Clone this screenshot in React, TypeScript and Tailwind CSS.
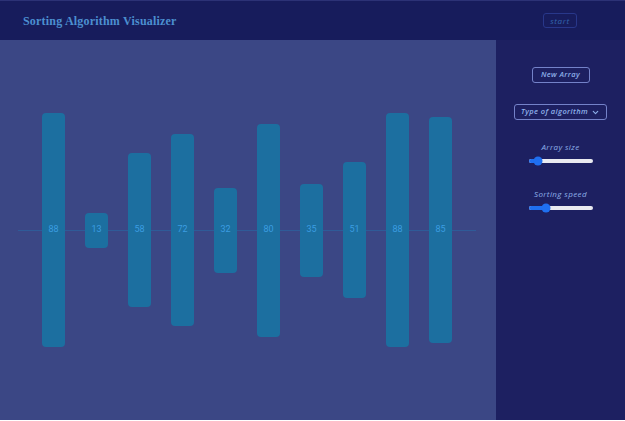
import { ChevronDown } from 'lucide-react';

const values = [88, 13, 58, 72, 32, 80, 35, 51, 88, 85];

function Slider({ pos }: { pos: number }) {
  return (
    <div className="relative w-[64px] h-[4px] rounded-full bg-[#e9eaf0]">
      <div className="absolute left-0 top-0 h-full rounded-full bg-[#1f6ff0]" style={{ width: pos }} />
      <div
        className="absolute top-1/2 -translate-y-1/2 -translate-x-1/2 w-[9px] h-[9px] rounded-full bg-[#1f6ff0]"
        style={{ left: pos }}
      />
    </div>
  );
}

export default function App() {
  return (
    <div className="w-[625px] h-[420px] flex flex-col bg-[#1d2061] font-['Open_Sans',sans-serif]">
      <header className="h-[40px] shrink-0 flex items-center justify-between pl-[23px] pr-[48px] bg-[#171c5c] border-t border-[#2c3276]">
        <h1 className="font-['Liberation_Serif',serif] font-bold text-[12px] tracking-[0.2px] text-[#4c8fd0]">
          Sorting Algorithm Visualizer
        </h1>
        <button className="w-[34px] h-[15px] rounded-[3px] border border-[#28378a] text-[8px] italic tracking-[0.6px] text-[#3467b0] leading-none">
          start
        </button>
      </header>

      <div className="flex flex-1">
        <main className="relative w-[496px] h-full bg-[#3b4785] flex items-center pl-[42px] gap-[20px]">
          <div className="absolute left-[18px] right-[20px] top-1/2 h-px bg-[#2f5b98]" />
          {values.map((v, i) => (
            <div
              key={i}
              className="relative w-[23px] rounded-[4px] bg-[#1c6fa0] flex items-center justify-center"
              style={{ height: Math.round(v * 2.66) }}
            >
              <span className="font-['Roboto',sans-serif] text-[9px] text-[#3b9de0]">{v}</span>
            </div>
          ))}
        </main>

        <aside className="flex-1 flex flex-col items-center pt-[27px]">
          <button className="w-[58px] h-[16px] rounded-[3px] border border-[#7482c9] text-[7.5px] italic font-semibold tracking-[0.4px] text-[#8eb0ea] leading-none">
            New Array
          </button>
          <button className="mt-[21px] w-[93px] h-[16px] rounded-[3px] border border-[#7482c9] flex items-center justify-center gap-[3px] text-[7.5px] italic font-semibold tracking-[0.4px] text-[#8eb0ea] leading-none">
            Type of algorithm
            <ChevronDown className="w-[9px] h-[9px]" strokeWidth={3} />
          </button>
          <p className="mt-[23px] text-[8px] italic font-medium tracking-[0.4px] text-[#8eb0ea] leading-none">
            Array size
          </p>
          <div className="mt-[8px]">
            <Slider pos={9} />
          </div>
          <p className="mt-[27px] text-[8px] italic font-medium tracking-[0.4px] text-[#8eb0ea] leading-none">
            Sorting speed
          </p>
          <div className="mt-[8px]">
            <Slider pos={17} />
          </div>
        </aside>
      </div>
    </div>
  );
}
